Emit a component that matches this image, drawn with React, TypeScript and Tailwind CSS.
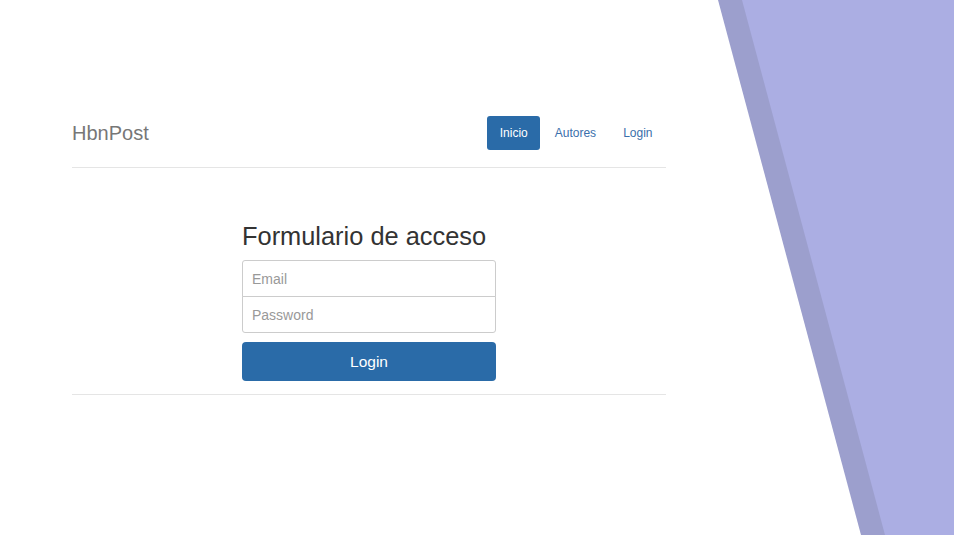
import React from 'react';

const font = { fontFamily: '"Liberation Sans", Arial, sans-serif' };

const Decoration: React.FC = () => (
    <svg className="absolute inset-0 pointer-events-none" width="954" height="535" viewBox="0 0 954 535">
        <polygon points="718,0 954,0 954,535 861,535" fill="#9c9fcd" />
        <polygon points="742,0 954,0 954,535 885,535" fill="#abaee3" />
    </svg>
);

export default function App() {
    return (
        <div className="relative w-full h-[535px] overflow-hidden bg-white" style={font}>
            <Decoration />
            <div className="relative w-[594px] ml-[72px] pt-[116px]">
                <header className="flex items-center justify-between h-[34px] mb-[17px]">
                    <span className="text-[20px] text-[#777] leading-none">HbnPost</span>
                    <nav className="flex items-center gap-[2px] text-[12px] mr-px">
                        <a className="h-[34px] px-[12.5px] flex items-center rounded-[3px] bg-[#2a6ba8] text-white">Inicio</a>
                        <a className="h-[34px] px-[12.5px] flex items-center text-[#3a6fab]">Autores</a>
                        <a className="h-[34px] px-[12.5px] flex items-center text-[#3a6fab]">Login</a>
                    </nav>
                </header>
                <div className="border-t border-[#e5e5e5]" />
                <div className="w-[254px] mx-auto pt-[54px]">
                    <h2 className="text-[25.4px] leading-[28px] text-[#333] mb-[10px]">Formulario de acceso</h2>
                    <div className="flex flex-col">
                        <input
                            placeholder="Email"
                            className="h-[37px] px-[9px] border border-[#ccc] rounded-t-[3px] text-[14px] text-[#555] placeholder:text-[#999] outline-none"
                        />
                        <input
                            placeholder="Password"
                            type="password"
                            className="h-[37px] -mt-px px-[9px] border border-[#ccc] rounded-b-[3px] text-[14px] text-[#555] placeholder:text-[#999] outline-none"
                        />
                    </div>
                    <button className="mt-[9px] w-full h-[39px] rounded-[4px] bg-[#2a6ba8] text-white text-[15.5px]">Login</button>
                </div>
                <div className="mt-[13px] border-t border-[#e5e5e5]" />
            </div>
        </div>
    );
}
